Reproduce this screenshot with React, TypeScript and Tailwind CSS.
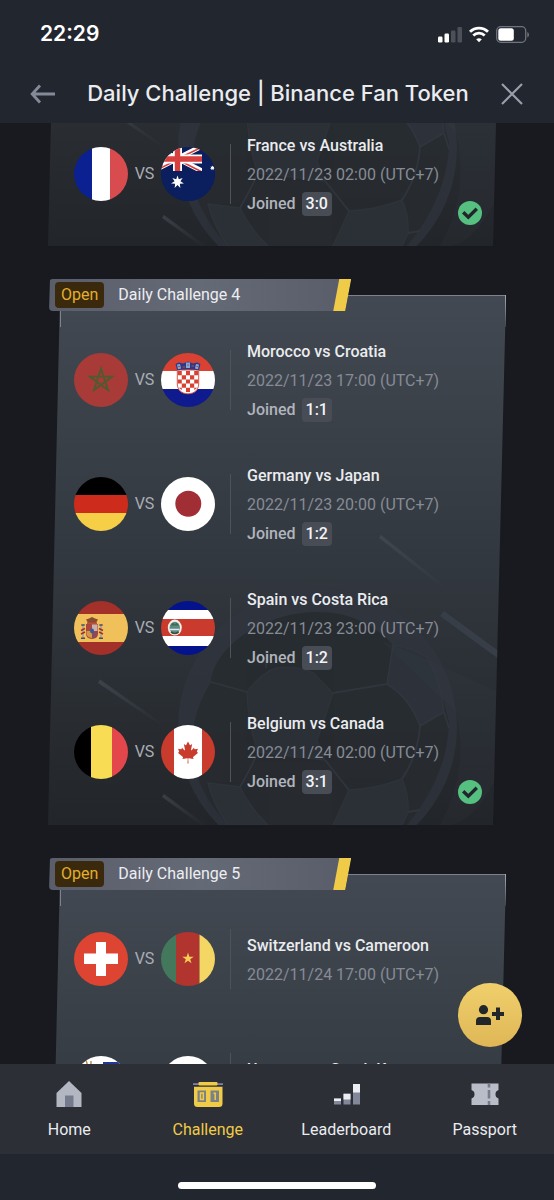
import React, { useState } from 'react';
import clsx from 'clsx';

interface Match {
    home: string;
    away: string;
    date: string;
    joined?: string;
}

interface Challenge {
    title?: string;
    status?: string;
    joined: boolean;
    matches: Match[];
}

type Tab = 'Home' | 'Challenge' | 'Leaderboard' | 'Passport';

const TABS: Tab[] = ['Home', 'Challenge', 'Leaderboard', 'Passport'];

const challenges: Challenge[] = [
    {
        joined: true,
        matches: [{ home: 'France', away: 'Australia', date: '2022/11/23 02:00 (UTC+7)', joined: '3:0' }],
    },
    {
        title: 'Daily Challenge 4',
        status: 'Open',
        joined: true,
        matches: [
            { home: 'Morocco', away: 'Croatia', date: '2022/11/23 17:00 (UTC+7)', joined: '1:1' },
            { home: 'Germany', away: 'Japan', date: '2022/11/23 20:00 (UTC+7)', joined: '1:2' },
            { home: 'Spain', away: 'Costa Rica', date: '2022/11/23 23:00 (UTC+7)', joined: '1:2' },
            { home: 'Belgium', away: 'Canada', date: '2022/11/24 02:00 (UTC+7)', joined: '3:1' },
        ],
    },
    {
        title: 'Daily Challenge 5',
        status: 'Open',
        joined: false,
        matches: [
            { home: 'Switzerland', away: 'Cameroon', date: '2022/11/24 17:00 (UTC+7)' },
            { home: 'Uruguay', away: 'South Korea', date: '2022/11/24 20:00 (UTC+7)' },
        ],
    },
];

// Points of a star with n tips
const star = (cx: number, cy: number, n: number, outer: number, inner: number) =>
    Array.from({ length: n * 2 }, (_, i) => {
        const r = i % 2 === 0 ? outer : inner;
        const a = (Math.PI * i) / n - Math.PI / 2;
        return `${(cx + r * Math.cos(a)).toFixed(2)},${(cy + r * Math.sin(a)).toFixed(2)}`;
    }).join(' ');

const Vertical = ({ colors, stops }: { colors: string[]; stops: number[] }) => (
    <>
        {colors.map((c, i) => (
            <rect key={i} x={stops[i]} width={stops[i + 1] - stops[i]} height="54" fill={c} />
        ))}
    </>
);

const Horizontal = ({ colors, stops }: { colors: string[]; stops: number[] }) => (
    <>
        {colors.map((c, i) => (
            <rect key={i} y={stops[i]} height={stops[i + 1] - stops[i]} width="54" fill={c} />
        ))}
    </>
);

const flags: Record<string, React.ReactNode> = {
    France: <Vertical colors={['#0b2191', '#ffffff', '#d84c50']} stops={[0, 18, 36, 54]} />,
    Australia: (
        <>
            <rect width="54" height="54" fill="#0b1f5e" />
            <g>
                <path d="M-8 -1 41 24M41 -1 -8 24" stroke="#fff" strokeWidth="5" />
                <path d="M-8 0 16.5 12M41 0 16.5 12M-8 25 16.5 12.5M41 25 16.5 12.5" stroke="#d8403f" strokeWidth="1.6" />
                <path d="M16.5 0V24M0 12H41" stroke="#fff" strokeWidth="9" />
                <path d="M16.5 0V24M0 12H41" stroke="#d8403f" strokeWidth="5.4" />
            </g>
            <rect x="41" width="13" height="30" fill="#0b1f5e" />
            <rect y="24" width="54" height="30" fill="#0b1f5e" />
            <polygon points={star(16.5, 35, 7, 6.6, 3)} fill="#fff" />
            <polygon points={star(51.5, 21, 7, 2.6, 1.3)} fill="#fff" />
        </>
    ),
    Morocco: (
        <>
            <rect width="54" height="54" fill="#a83b38" />
            <path
                d="M27 15.5 34 37 15.8 23.6H38.2L20 37Z"
                fill="none"
                stroke="#505a2e"
                strokeWidth="1.9"
            />
        </>
    ),
    Croatia: (
        <>
            <Horizontal colors={['#d94233', '#ffffff', '#0f1a8e']} stops={[0, 18, 36, 54]} />
            <path d="M16 17.5H38V31C38 37 33 41 27 41S16 37 16 31Z" fill="#fff" />
            <g fill="#d94233">
                <path d="M16.8 18h4v4.2h-4zM25 18h4v4.2h-4zM33.2 18h4v4.2h-4zM20.8 22.2H25v4.2h-4.2zM29 22.2h4.2v4.2H29zM16.8 26.4h4v4.2h-4zM25 26.4h4v4.2h-4zM33.2 26.4h4v4.2h-4zM20.8 30.6H25v4.2h-4.2zM29 30.6h4.2v4.2H29zM25 34.8h4V39h-4zM17.6 34.8h3.2V37zM33.2 34.8h3.2L33.2 37z" />
            </g>
            <path d="M16.3 18V31C16.3 37 21 40.8 27 40.8S37.7 37 37.7 31V18" fill="none" stroke="#d94233" strokeWidth="0.9" />
            <path d="M14.5 11 18 9.5 22 10.5 27 8.5 32 10.5 36 9.5 39.5 11 37.8 17.5Q27 15 16.2 17.5Z" fill="#2a3a88" />
            <path d="M16 11.5 19 11 20 15.5 17 16.2ZM25 9.5H29V15H25ZM35 11 38 11.5 37 16.2 34 15.5Z" fill="#7fa9d6" />
            <path d="M17 13.5h2M26 12h2M35.5 13.5h1.5M21.5 14H24M30.5 13H33" stroke="#c9473b" strokeWidth="1" />
        </>
    ),
    Germany: <Horizontal colors={['#000000', '#cd2c1d', '#f6cf46']} stops={[0, 18, 36, 54]} />,
    Japan: (
        <>
            <rect width="54" height="54" fill="#fff" />
            <circle cx="27.3" cy="26.7" r="13" fill="#a12d35" />
        </>
    ),
    Spain: (
        <>
            <Horizontal colors={['#a33029', '#f0c15b', '#a33029']} stops={[0, 13, 41, 54]} />
            <path d="M9 24V37M27 24V37" stroke="#b7a58c" strokeWidth="2" />
            <path d="M7 37.3h4M25 37.3h4M7.3 24h3.4M25.3 24h3.4" stroke="#4c4a68" strokeWidth="1.5" />
            <path d="M7 29.5 11 27.5M7 33 11 31M25 27.5 29 29.5M25 31 29 33" stroke="#a33029" strokeWidth="1.4" />
            <path d="M12 23H24V32.5Q24 37.5 18 38Q12 37.5 12 32.5Z" fill="#a9463f" />
            <path d="M18 23.5H23.5V30H18Z" fill="#c9b3a8" />
            <path d="M12.5 30H18V37Q13 36.5 12.5 32.5Z" fill="#d09a45" />
            <path d="M18 30.5H23.5V33Q23 36.5 18 37Z" fill="#8b4a5b" />
            <ellipse cx="18" cy="30" rx="2" ry="2.4" fill="#41569a" />
            <path d="M12 18.5 14 21.8H22L24 18.5 21 17.6 18 16 15 17.6Z" fill="#8c4a33" />
            <path d="M13 22.2H23" stroke="#a33029" strokeWidth="1.3" />
        </>
    ),
    'Costa Rica': (
        <>
            <Horizontal colors={['#04128c', '#ffffff', '#ca3b2d', '#ffffff', '#04128c']} stops={[0, 9, 18, 35, 45, 54]} />
            <ellipse cx="13.8" cy="26.6" rx="7" ry="8" fill="#f3eee6" />
            <ellipse cx="13.8" cy="26.8" rx="5.2" ry="6" fill="#5c8a86" />
            <path d="M9.5 24.5 12 21.8 13.8 23.4 15.6 21.8 18.1 24.5Z" fill="#3c6b46" />
            <path d="M9 28.5H18.6" stroke="#dfe8ee" strokeWidth="1.6" />
            <path d="M10 31Q13.8 34 17.6 31" fill="none" stroke="#33523c" strokeWidth="1.6" />
        </>
    ),
    Belgium: <Vertical colors={['#000000', '#f8dc54', '#e4474b']} stops={[0, 17, 38, 54]} />,
    Canada: (
        <>
            <Vertical colors={['#c93b2d', '#ffffff', '#c93b2d']} stops={[0, 13, 41, 54]} />
            <path
                transform="translate(0.6 14.2) scale(0.0055)"
                fill="#c93b2d"
                d="m4890 4430-45-863a95 95 0 0 1 111-98l859 151-116-320a65 65 0 0 1 20-73l941-762-212-99a65 65 0 0 1-34-79l186-572-542 115a65 65 0 0 1-73-38l-105-247-423 454a65 65 0 0 1-111-57l204-1052-327 189a65 65 0 0 1-91-27l-332-652-332 652a65 65 0 0 1-91 27l-327-189 204 1052a65 65 0 0 1-111 57l-423-454-105 247a65 65 0 0 1-73 38l-542-115 186 572a65 65 0 0 1-34 79l-212 99 941 762a65 65 0 0 1 20 73l-116 320 859-151a95 95 0 0 1 111 98l-45 863z"
            />
        </>
    ),
    Switzerland: (
        <>
            <rect width="54" height="54" fill="#dd4431" />
            <path d="M22 10H32V21.5H44V32H32V44H22V32H10V21.5H22Z" fill="#fff" />
        </>
    ),
    Cameroon: (
        <>
            <Vertical colors={['#44785d', '#b1352e', '#f3d663']} stops={[0, 15, 38.5, 54]} />
            <polygon points={star(27, 26.5, 5, 6, 2.3)} fill="#f5cf55" />
        </>
    ),
    Uruguay: (
        <>
            <rect width="54" height="54" fill="#fff" />
            <path d="M29 6H54V12H29ZM29 18H54V24H29ZM0 30H54V36H0ZM0 42H54V48H0Z" fill="#23349b" />
            <path d="M8 7 11 12M12 4 14 11M17 5 17 11" stroke="#b08a4a" strokeWidth="1.4" />
            <circle cx="15" cy="16" r="5" fill="#e0a93c" />
        </>
    ),
    'South Korea': (
        <>
            <rect width="54" height="54" fill="#fff" />
            <path d="M14 27a13 13 0 0 1 26 0Z" fill="#c93b3a" />
            <path d="M14 27a13 13 0 0 0 26 0Z" fill="#1c3f8c" />
        </>
    ),
};

const Flag = ({ name }: { name: string }) => (
    <svg viewBox="0 0 54 54" className="size-[54px] shrink-0 rounded-full" role="img" aria-label={name}>
        {flags[name]}
    </svg>
);

// Football and light streaks behind the rows of a card
const CardBackground = () => (
    <div className="pointer-events-none absolute inset-x-0 bottom-0 h-[530px] bg-linear-to-b from-[#434952] via-[#32383f] via-50% to-[#222529]">
        <svg viewBox="48 295 458 530" preserveAspectRatio="xMidYMax slice" className="size-full" aria-hidden="true">
            <defs>
                <linearGradient id="streak" x1="0" y1="0" x2="1" y2="1">
                    <stop offset="0" stopColor="#4a505a" stopOpacity="0.6" />
                    <stop offset="1" stopColor="#4a505a" stopOpacity="0" />
                </linearGradient>
            </defs>
            <circle cx="317.5" cy="727" r="139.5" fill="#30353e" opacity="0.7" />
            <path
                d="M211 682C213 650 260 612 318 612C350 612 375 625 393 645L427 657C440 680 443 700 449 722C448 765 428 800 407 825H228C205 800 192 775 192 745C192 720 200 700 211 682Z"
                fill="#272b30"
                opacity="0.9"
            />
            <g fill="#2d323a" stroke="#31363e" strokeWidth="1.5" strokeLinejoin="round">
                <path d="M247 692 Q260 674 276 668 Q296 665 313 673L333 693 317 740 325 760 258 752Q248 725 247 692Z" opacity="0.8" />
                <path d="M387 684 393 645 Q410 647 427 657 Q441 680 444 712L420 726Q410 698 387 684Z" />
                <path d="M349 790Q376 789 402 779Q409 795 408 812L402 825H333Q341 808 349 790Z" opacity="0.8" />
                <path d="M208 783 240 787Q250 808 268 825H228Q214 806 208 783Z" opacity="0.8" />
            </g>
            <g fill="none" stroke="#30353d" strokeWidth="1.8">
                <path d="M211 682 247 692M333 693 387 684M420 726Q418 755 402 779M325 760 349 790M240 787Q250 770 258 752M266 668V650M444 712 449 728M408 812 420 810" />
            </g>
            <path d="M380 640Q440 664 500 693L495 780Q470 830 440 825Q470 770 456 712Z" fill="#353b48" opacity="0.18" />
            <g fill="url(#streak)">
                <path d="M100 679.500 163 724 162 726 98 683Z" />
                <path d="M164 794 206 825H201L162 797Z" />
                <path d="M381 535 445 586 442 587 379 538Z" />
            </g>
            <path d="M444 611 500 652V660L440 616Z" fill="#383e48" />
        </svg>
    </div>
);

const MatchRow = ({ match }: { match: Match }) => (
    <li className="flex min-h-[88px] items-center">
        <Flag name={match.home} />
        <span className="w-[33px] text-center text-base text-[#a9adb5]">VS</span>
        <Flag name={match.away} />
        <div className="ml-[15px] mr-4 h-[60px] w-px bg-[#4d525b]" />
        <div className="min-w-0 flex-1 pt-px font-medium">
            <h3 className="text-base leading-[29px] text-[#eaecef]">
                {match.home} vs {match.away}
            </h3>
            <p className="text-base leading-[29px] font-normal text-[#868b95]">{match.date}</p>
            {match.joined && (
                <p className="flex h-[29px] items-center gap-1.5 text-base text-[#b0b4bc]">
                    Joined
                    <span className="flex h-6 items-center rounded bg-[#484c55] px-1 text-[#f3f4f6]">{match.joined}</span>
                </p>
            )}
        </div>
    </li>
);

const ChallengeCard = ({ challenge }: { challenge: Challenge }) => (
    <section>
        {challenge.title && (
            <div className="relative z-10 -mb-4 ml-px flex h-8 w-[66%] items-center rounded-l-sm bg-linear-to-r from-[#5a5e6a] via-[#656a77] to-[#595d69] pl-[6px] [clip-path:polygon(1px_0,100%_0,calc(100%-6px)_100%,0_100%)]">
                <span className="rounded bg-[#3a290c] px-1.5 text-base leading-[26px] text-[#e3b02c]">{challenge.status}</span>
                <h2 className="ml-[14px] text-base text-[#eceef1]">{challenge.title}</h2>
                <div className="ml-auto w-[18px] self-stretch bg-[#f0cb48] [clip-path:polygon(6px_0,100%_0,calc(100%-6px)_100%,0_100%)]" />
            </div>
        )}
        <div
            className={clsx(
                'relative overflow-hidden pl-[26px]',
                challenge.title
                    ? 'min-h-[530px] pt-[41px] pb-7 [clip-path:polygon(12px_0,100%_0,calc(100%-13px)_100%,0_100%)]'
                    : 'pt-[7px] pb-7 [clip-path:polygon(3px_0,calc(100%-10px)_0,calc(100%-13px)_100%,0_100%)]'
            )}
        >
            <CardBackground />
            {challenge.title && (
                <>
                    <div className="absolute inset-x-0 top-0 h-px bg-[#7d828b]" />
                    <div className="absolute top-0 right-0 h-8 w-px bg-[#a4a8af]" />
                    <div className="absolute top-0 left-3 h-8 w-px bg-[#7d828b]" />
                </>
            )}
            <ul className="relative flex flex-col gap-9">
                {challenge.matches.map((m) => (
                    <MatchRow key={m.home} match={m} />
                ))}
            </ul>
            {challenge.joined && (
                <svg viewBox="0 0 24 24" className="absolute right-6 bottom-[21px] size-6" role="img" aria-label="Joined">
                    <circle cx="12" cy="12" r="12" fill="#56c080" />
                    <path d="M5.200 11.200 10.300 16.200 18.800 7.800" fill="none" stroke="#22262a" strokeWidth="3.400" />
                </svg>
            )}
        </div>
    </section>
);

const StatusIcons = () => (
    <div className="flex items-center gap-[7px]" aria-hidden="true">
        <svg viewBox="0 0 24 17" className="h-[17px] w-6">
            <rect x="0" y="10.500" width="4.500" height="6" rx="1.200" fill="#fff" />
            <rect x="6.500" y="7.500" width="4.500" height="9" rx="1.200" fill="#fff" />
            <rect x="13" y="4.500" width="4.500" height="12" rx="1.200" fill="#4c5059" />
            <rect x="19.500" y="1" width="4.500" height="15.500" rx="1.200" fill="#4c5059" />
        </svg>
        <svg viewBox="0 0 20 17" className="h-[17px] w-5" fill="none" stroke="#fff" strokeWidth="2.800">
            <path d="M1 5.800C6 0.800 14 0.800 19 5.800" />
            <path d="M4.300 9.400C7.500 6.300 12.500 6.300 15.700 9.400" />
            <path d="M10 16.300 7.200 13.300Q10 11 12.800 13.300Z" fill="#fff" stroke="none" />
        </svg>
        <svg viewBox="0 0 34 17" className="h-[17px] w-[34px]">
            <rect x="0.700" y="0.700" width="29" height="15.600" rx="4" fill="none" stroke="#70747c" strokeWidth="1.300" />
            <rect x="2.300" y="2.300" width="15.500" height="12.400" rx="2.500" fill="#fff" />
            <path d="M31.300 6V11.500Q33 10.800 33 8.800T31.300 6Z" fill="#70747c" />
        </svg>
    </div>
);

const TabIcon = ({ tab }: { tab: Tab }) => {
    switch (tab) {
        case 'Home':
            return (
                <svg viewBox="0 0 32 28" className="h-7 w-8" aria-hidden="true">
                    <path d="M16 1 28.500 13V27H3.500V13Z" fill="#b3b7c2" />
                    <path d="M12 15.500H20.500V27H12Z" fill="#757b8d" />
                </svg>
            );
        case 'Challenge':
            return (
                <svg viewBox="0 0 32 28" className="h-7 w-8" aria-hidden="true">
                    <path d="M1 3.200H31V5H1Z" fill="#7b7fae" />
                    <rect x="6.500" y="2" width="19" height="3.500" rx="1" fill="#f0cb48" />
                    <path d="M2 6.800H30.500V23.500Q30.500 27 27 27H5.500Q2 27 2 23.500Z" fill="#f0cb48" />
                    <path d="M5.500 10.500H14V22H5.500ZM18.500 10.500H27V22H18.500Z" fill="#7c8188" />
                    <path d="M8.500 13H11.300V19.500H8.500ZM21.500 13.200H23.200V20" fill="none" stroke="#f0cb48" strokeWidth="1.500" />
                </svg>
            );
        case 'Leaderboard':
            return (
                <svg viewBox="0 0 32 28" className="h-7 w-8" aria-hidden="true">
                    <path d="M4 18.500H11V24.500H4ZM13.500 13.800H20.500V24.500H13.500ZM23 4H30V24.500H23Z" fill="#82879a" />
                    <path d="M4 18.500H11V21H4ZM13.500 13.800H20.500V19.500H13.500ZM23 4H30V12.500H23Z" fill="#eceef2" />
                </svg>
            );
        case 'Passport':
            return (
                <svg viewBox="0 0 32 28" className="h-7 w-8" aria-hidden="true">
                    <path d="M2.500 3.500H29.500V10A4.500 4.500 0 0 0 29.500 18.500V25H2.500V18.500A4.500 4.500 0 0 0 2.500 10Z" fill="#b9bdc8" />
                    <path d="M20 3.500V7.500M20 10V18.500M20 21V25" stroke="#767b8a" strokeWidth="2.600" />
                </svg>
            );
    }
};

const App: React.FC = () => {
    const [activeTab, setActiveTab] = useState<Tab>('Challenge');

    return (
        <div className="flex h-screen flex-col bg-[#191a1f] font-['Roboto','Liberation_Sans',sans-serif]">
            <header className="bg-[#22262f] font-['Inter','Liberation_Sans',sans-serif]">
                <div className="flex h-16 items-center justify-between pt-1 pr-6 pl-10">
                    <time className="text-[21px] font-semibold text-white">22:29</time>
                    <StatusIcons />
                </div>
                <div className="flex h-[59px] items-center justify-between px-[30px]">
                    <button type="button" aria-label="Back">
                        <svg viewBox="0 0 26 20" className="h-5 w-[26px]" fill="none" stroke="#858a98" strokeWidth="2.800">
                            <path d="M10 1.500 2.200 10 10 18.500M2.500 10H25" />
                        </svg>
                    </button>
                    <h1 className="text-[22px] font-medium text-[#eaecef]">Daily Challenge | Binance Fan Token</h1>
                    <button type="button" aria-label="Close">
                        <svg viewBox="0 0 24 22" className="h-[22px] w-6" fill="none" stroke="#9a9eaa" strokeWidth="2.200">
                            <path d="M2 1 22 21M22 1 2 21" />
                        </svg>
                    </button>
                </div>
            </header>

            <div className="relative min-h-0 flex-1">
                <main className="flex h-full flex-col gap-[33px] overflow-hidden px-12">
                    {challenges.map((c, i) => (
                        <ChallengeCard key={i} challenge={c} />
                    ))}
                </main>
                <button
                    type="button"
                    aria-label="Invite friends"
                    className="absolute right-8 bottom-[17px] z-20 flex size-16 items-center justify-center rounded-full bg-linear-to-b from-[#f0d06c] to-[#dfb656]"
                >
                    <svg viewBox="0 0 28 20" className="h-5 w-7" fill="#22262a">
                        <circle cx="7.500" cy="4.700" r="4.600" />
                        <path d="M0 20V16Q0 12 4 12H11Q15 12 15 16V20Z" />
                        <path d="M20 2.500H24V7H28V11H24V15H20V11H16V7H20Z" />
                    </svg>
                </button>
            </div>

            <footer className="bg-[#22262f]">
                <nav className="grid h-[90px] grid-cols-4 bg-[#2c2f36]">
                    {TABS.map((tab) => (
                        <button
                            key={tab}
                            type="button"
                            onClick={() => setActiveTab(tab)}
                            className={clsx(
                                'flex flex-col items-center gap-2.5 pt-4 text-base',
                                tab === activeTab ? 'text-[#f0cb48]' : 'text-[#eaecef]'
                            )}
                        >
                            <TabIcon tab={tab} />
                            {tab}
                        </button>
                    ))}
                </nav>
                <div className="flex h-[46px] items-end justify-center pb-[11px]">
                    <div className="h-[7px] w-[198px] rounded-full bg-white" />
                </div>
            </footer>
        </div>
    );
};

export default App;
